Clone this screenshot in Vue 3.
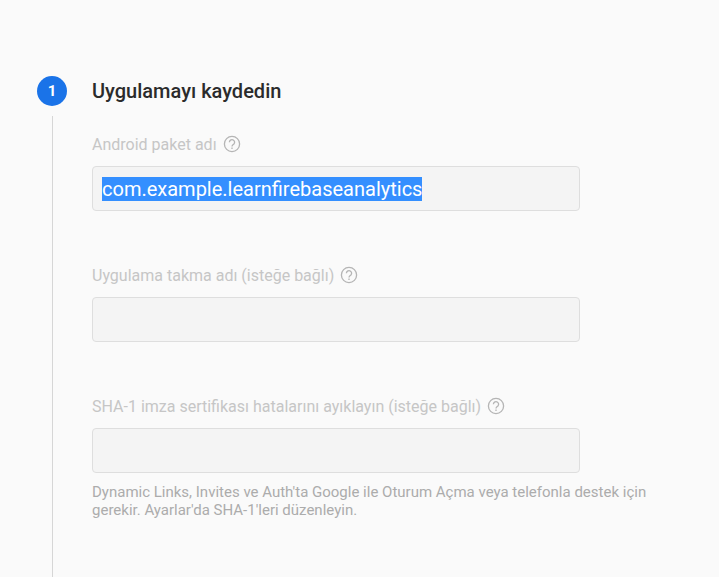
<script setup>
import { onMounted, ref } from 'vue'

const form = ref(null)
const fields = [
  { id: 'package-name', label: 'Android paket adı', value: 'com.example.learnfirebaseanalytics' },
  { id: 'nickname', label: 'Uygulama takma adı (isteğe bağlı)', value: '' },
  {
    id: 'sha1',
    label: 'SHA-1 imza sertifikası hatalarını ayıklayın (isteğe bağlı)',
    value: '',
    hint: "Dynamic Links, Invites ve Auth'ta Google ile Oturum Açma veya telefonla destek için gerekir. Ayarlar'da SHA-1'leri düzenleyin.",
  },
]

onMounted(() => {
  const input = form.value.querySelector('input')
  input.focus()
  input.select()
})
</script>

<template>
  <main class="step">
    <div class="rail">
      <span class="badge">1</span>
      <span class="line"></span>
    </div>
    <section class="content">
      <h2 class="title">Uygulamayı kaydedin</h2>
      <form ref="form" class="fields" @submit.prevent>
        <div v-for="field in fields" :key="field.id" class="field">
          <div class="caption">
            <label :for="field.id">{{ field.label }}</label>
            <button type="button" class="help">
              <svg viewBox="0 0 20 20" aria-hidden="true">
                <circle cx="10" cy="10" r="7.6" />
                <path d="M7.400 8.300a2.600 2.600 0 1 1 4.500 1.700c-.9.9-1.900 1.300-1.900 2.600M10 13.600v1.500" />
              </svg>
            </button>
          </div>
          <input :id="field.id" v-model="field.value" type="text" spellcheck="false" autocomplete="off" />
          <p v-if="field.hint" class="hint">{{ field.hint }}</p>
        </div>
      </form>
    </section>
  </main>
</template>

<style>
body {
  background: #fafafa;
}
</style>

<style scoped>
.step {
  box-sizing: border-box;
  display: flex;
  gap: 25px;
  min-height: 100vh;
  padding: 76px 64px 0 37px;
  font-family: Roboto, sans-serif;
}
.rail {
  display: flex;
  flex: none;
  flex-direction: column;
  align-items: center;
  gap: 10px;
  width: 30px;
}
.badge {
  display: flex;
  align-items: center;
  justify-content: center;
  width: 30px;
  height: 30px;
  border-radius: 50%;
  background: #1a73e8;
  color: #fff;
  font-size: 15px;
  font-weight: 700;
}
.line {
  flex: 1;
  width: 1px;
  background: #d6d6d6;
}
.content {
  flex: 1;
  min-width: 0;
}
.title {
  margin: 0 0 28px;
  color: #2b2b2b;
  font-size: 20px;
  font-weight: 500;
  line-height: 30px;
}
.fields {
  display: flex;
  flex-direction: column;
  gap: 54px;
}
.caption {
  display: flex;
  align-items: center;
  gap: 5px;
  height: 20px;
  margin-bottom: 12px;
  color: #c6c6c6;
  font-size: 16px;
  font-weight: 400;
  white-space: nowrap;
}
.help {
  display: flex;
  padding: 0;
  border: 0;
  background: none;
}
.help svg {
  width: 20px;
  height: 20px;
  fill: none;
  stroke: #b5b5b5;
  stroke-width: 1.3;
}
input {
  display: block;
  box-sizing: border-box;
  width: 100%;
  max-width: 488px;
  height: 45px;
  padding: 0 9px;
  border: 1px solid #dedede;
  border-radius: 4px;
  outline: none;
  background: #f4f4f4;
  color: #212121;
  font-family: inherit;
  font-size: 20px;
}
input::selection {
  background: rgba(51, 143, 255, 0.996);
  color: #fff;
}
.hint {
  margin: 10px 0 0;
  color: #acacac;
  font-size: 15px;
  line-height: 18px;
}
</style>
